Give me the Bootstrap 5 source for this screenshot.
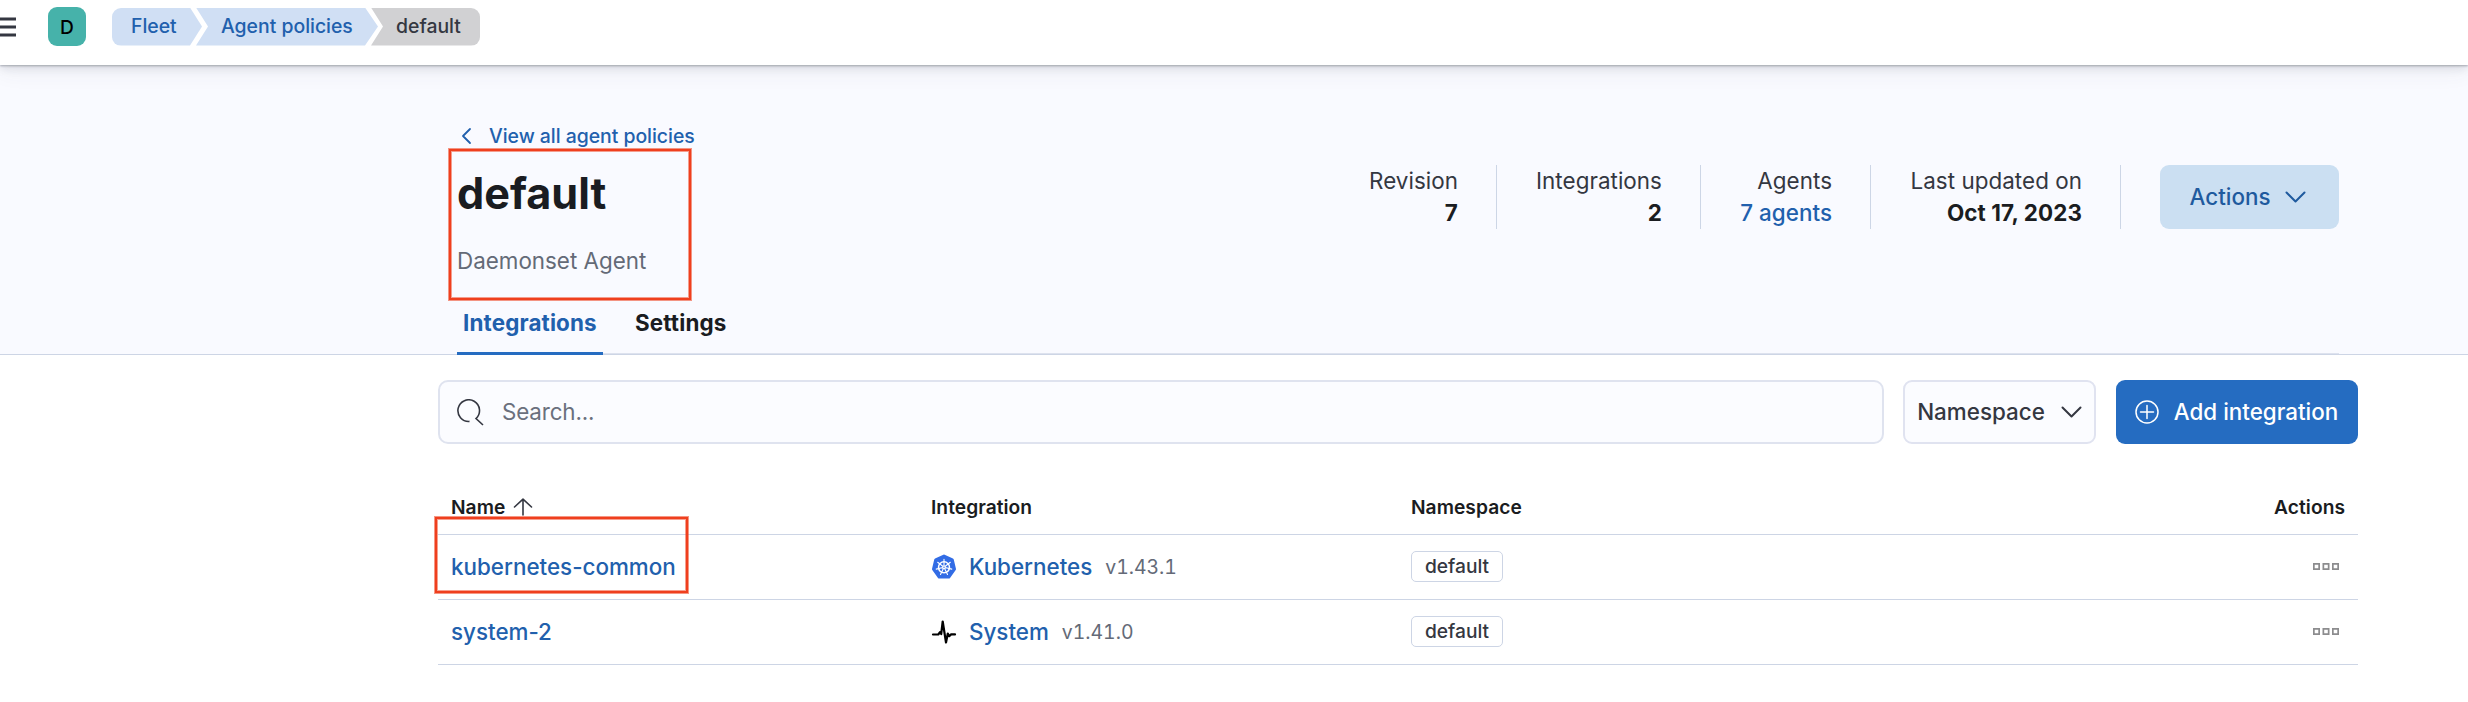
<!DOCTYPE html>
<html lang="en">
<head>
<meta charset="utf-8">
<title>Fleet - Agent policies - default</title>
<link rel="stylesheet" href="https://cdn.jsdelivr.net/npm/bootstrap@5.3.0/dist/css/bootstrap.min.css">
<style>
  body { font-family: Inter, "Liberation Sans", sans-serif; font-size: 22.4px; line-height: 32px; color: #343741; background: #fff; height: 702px; overflow: hidden; }
  a { color: #2160ad; text-decoration: none; font-weight: 500; }
  svg { display: block; flex: none; }
  .app-header { height: 65px; padding-bottom: 12px; position: relative; z-index: 2; background: #fff; box-shadow: 0 1px 2px rgba(60,65,80,.38), 0 3px 9px rgba(60,65,80,.14), 0 8px 20px rgba(60,65,80,.06); }
  .burger { width: 16px; margin-right: 32px; }
  .avatar { width: 38px; height: 39px; border-radius: 9px; background: #46b2aa; color: #000; font-size: 19.2px; font-weight: 500; margin-right: 26px; }
  .crumb { height: 38px; font-size: 19.4px; font-weight: 500; background: #d0dff4; color: #2160ad; line-height: 37px; white-space: nowrap; }
  .crumb-first { width: 90px; padding-left: 19px; border-radius: 9px 0 0 9px; clip-path: polygon(0 0,78px 0,100% 50%,78px 100%,0 100%); }
  .crumb-mid { width: 182px; margin-left: -6px; padding-left: 25px; clip-path: polygon(0 0,169px 0,100% 50%,169px 100%,0 100%,12px 50%); }
  .crumb-last { width: 109px; margin-left: -7px; padding-left: 25px; border-radius: 0 9px 9px 0; background: #d1d1d3; color: #343741; clip-path: polygon(0 0,100% 0,100% 100%,0 100%,12px 50%); }
  .page-head { height: 290px; background: #f9faff; border-bottom: 1px solid #cdd5e5; }
  .head-inner { width: 1882px; margin-left: 457px; height: 289px; border-bottom: 1px solid #dde2ee; padding-top: 55px; }
  .back-link { font-size: 19.4px; line-height: 32px; gap: 17px; padding-left: 4px; height: 32px; letter-spacing: -.02px; }
  .policy-title { font-size: 43.2px; font-weight: 700; line-height: 52px; color: #1a1c21; margin: 15px 0 0; letter-spacing: 0; }
  .policy-desc { color: #646a77; margin: 26px 0 0; line-height: 32px; }
  .stat { height: 64px; text-align: right; border-right: 1px solid #cdd6e6; padding-right: 38px; margin-right: 39px; white-space: nowrap; letter-spacing: .05px; }
  .stat:nth-child(2) { width: 165px; }
  .stat:nth-child(3) { width: 131px; }
  .stat:nth-child(4) { width: 211px; }
  .stat b { color: #1a1c21; font-weight: 700; letter-spacing: .12px; }
  .stats { padding-top: 45px; }
  .btn-tool { height: 64px; border-radius: 9px; border: 0; font-size: 22.4px; font-weight: 500; padding: 0; line-height: 32px; white-space: nowrap; }
  .btn-actions { width: 179px; background: #cbdff2; color: #1f5a9e; gap: 15px; padding-right: 3px; }
  .btn-ns { width: 193px; background: #fbfcff; border: 2px solid #e0e3f0; color: #343741; gap: 16px; margin-left: 19px; }
  .btn-add { width: 242px; background: #256cc1; color: #fff; gap: 15px; margin-left: 20px; padding-right: 1px; }
  .tab-item { height: 66px; line-height: 32px; padding-top: 18px; font-weight: 700; color: #1a1c21; letter-spacing: .15px; }
  .tab-on { width: 146px; color: #2160ad; border-bottom: 3px solid #256cc1; margin-right: 32px; padding-left: 6px; }
  .tabs-row { margin-top: 12px; }
  .content { width: 1920px; margin: 25px 0 0 438px; }
  .search-box { width: 1446px; height: 64px; border: 2px solid #dfe3ef; border-radius: 10px; background: #fbfcff; color: #6a707d; padding-left: 17px; gap: 18px; letter-spacing: -.15px; }
  .grid-row { display: grid; grid-template-columns: 480px 480px 480px 1fr; height: 65px; border-bottom: 1px solid #cdd5e5; padding-left: 13px; padding-right: 13px; align-items: center; }
  .grid-head { height: 56px; margin-top: 35px; font-size: 19.2px; font-weight: 600; color: #1a1c21; letter-spacing: .04px; }
  .pkg-link { margin-left: 12px; }
  .ver { font-size: 19.4px; color: #646a77; margin-left: 13px; font-variant-numeric: tabular-nums; }
  .ns-tag { width: 92px; height: 31px; border: 1px solid #cdd5e5; border-radius: 5px; font-size: 19.2px; font-weight: 500; line-height: 28px; text-align: center; margin-bottom: 2px; }
  .row-menu { margin: 0 6px 2px auto; }
  .marker { position: absolute; border: 2px solid #ef3f1e; box-shadow: 0 0 0 1px rgba(239,63,30,.55), inset 0 0 0 1px rgba(239,63,30,.5); pointer-events: none; }
  .marker-title { left: -8px; top: 29px; width: 242px; height: 151px; }
  .marker-row { left: -16px; top: -34px; width: 253px; height: 76px; }
</style>
</head>
<body>
<header class="app-header d-flex align-items-center">
  <svg class="burger" width="16" height="22" viewBox="0 0 16 22" fill="#343741"><path d="M0 1.500h16v3H0zM0 9.500h16v3H0zM0 17.500h16v3H0z"/></svg>
  <div class="avatar d-flex align-items-center justify-content-center">D</div>
  <nav class="d-flex">
    <a class="crumb crumb-first" href="#">Fleet</a>
    <a class="crumb crumb-mid" href="#">Agent policies</a>
    <span class="crumb crumb-last">default</span>
  </nav>
</header>

<section class="page-head">
  <div class="head-inner">
    <div class="d-flex justify-content-between">
      <div class="position-relative">
        <a class="back-link d-flex align-items-center text-nowrap" href="#"><svg width="11" height="18" viewBox="0 0 11 18" fill="none" stroke="#2160ad" stroke-width="1.800" stroke-linecap="round" stroke-linejoin="round"><path d="M9 2 2 9l7 7"/></svg>View all agent policies</a>
        <h1 class="policy-title">default</h1>
        <p class="policy-desc text-nowrap">Daemonset Agent</p>
        <div class="marker marker-title"></div>
      </div>
      <div class="stats d-flex align-items-start">
        <div class="stat">Revision<br><b>7</b></div>
        <div class="stat">Integrations<br><b>2</b></div>
        <div class="stat">Agents<br><a href="#">7 agents</a></div>
        <div class="stat">Last updated on<br><b>Oct 17, 2023</b></div>
        <button class="btn btn-tool btn-actions d-flex align-items-center justify-content-center">Actions <svg width="21" height="12" viewBox="0 0 21 12" fill="none" stroke="currentColor" stroke-width="2" stroke-linecap="round" stroke-linejoin="round"><path d="m1.500 1.500 9 9 9-9"/></svg></button>
      </div>
    </div>
    <div class="tabs-row d-flex">
      <div class="tab-item tab-on">Integrations</div>
      <div class="tab-item">Settings</div>
    </div>
  </div>
</section>

<main class="content">
  <div class="d-flex">
    <div class="search-box d-flex align-items-center">
      <svg width="27" height="27" viewBox="0 0 27 27" fill="none" stroke="#343741" stroke-width="1.600" stroke-linecap="butt"><path d="M12.500 22.400A10.800 10.800 0 1 1 19 19.600L26 26"/></svg>
      <span>Search...</span>
    </div>
    <button class="btn btn-tool btn-ns d-flex align-items-center justify-content-center">Namespace <svg width="21" height="12" viewBox="0 0 21 12" fill="none" stroke="currentColor" stroke-width="2" stroke-linecap="round" stroke-linejoin="round"><path d="m1.500 1.500 9 9 9-9"/></svg></button>
    <button class="btn btn-tool btn-add d-flex align-items-center justify-content-center"><svg width="24" height="24" viewBox="0 0 24 24" fill="none" stroke="#fff" stroke-width="1.500" stroke-linecap="round"><circle cx="12" cy="12" r="11"/><path d="M12 5.500v13M5.500 12h13"/></svg>Add integration</button>
  </div>

  <div class="grid-row grid-head">
    <div class="d-flex align-items-center">Name <svg class="ms-2" width="20" height="18" viewBox="0 0 20 18" fill="none" stroke="#343741" stroke-width="1.600" stroke-linecap="round" stroke-linejoin="round"><path d="M10 17V1.500M1.500 9 10 1.200 18.500 9"/></svg></div>
    <div>Integration</div>
    <div>Namespace</div>
    <div class="text-end">Actions</div>
  </div>
  <div class="grid-row">
    <div class="position-relative"><a href="#">kubernetes-common</a><div class="marker marker-row"></div></div>
    <div class="d-flex align-items-center">
      <svg width="26" height="26" viewBox="0 0 26 26"><path d="M13 2 21.300 5.900 23.500 15.200 17.800 23H8.200L2.500 15.200 4.700 5.900Z" fill="#326ce5" stroke="#326ce5" stroke-width="3" stroke-linejoin="round"/>
        <g fill="none" stroke="#fff" stroke-linecap="round"><circle cx="13" cy="13.300" r="5.500" stroke-width="1.500"/><path stroke-width="1.100" d="M13 13.300V5.300M13 13.300 19.300 8.300M13 13.300 20.800 15.100M13 13.300 16.500 20.500M13 13.300 9.500 20.500M13 13.300 5.200 15.100M13 13.300 6.700 8.300"/></g><circle cx="13" cy="13.300" r="1.700" fill="#fff"/><circle cx="13" cy="13.300" r=".7" fill="#326ce5"/></svg>
      <a class="pkg-link" href="#">Kubernetes</a><span class="ver">v1.43.1</span>
    </div>
    <div><div class="ns-tag">default</div></div>
    <svg class="row-menu" width="26" height="7" viewBox="0 0 26 7" fill="none" stroke="#8c8c8e" stroke-width="1.700"><path d="M.85.85h5.300v5.300h-5.300zM10.350.85h5.300v5.300h-5.300zM19.850.85h5.300v5.300h-5.300z"/></svg>
  </div>
  <div class="grid-row">
    <div><a href="#">system-2</a></div>
    <div class="d-flex align-items-center">
      <svg width="26" height="26" viewBox="0 0 26 26" fill="none" stroke="#000" stroke-width="2.200" stroke-linejoin="round" stroke-linecap="round"><path d="M2 15.500h5.300l1.700-2.300 1.200 1.800L11.700 2.500l3.300 21 1.800-9 1.400 2.700 1.900-1.800H24"/></svg>
      <a class="pkg-link" href="#">System</a><span class="ver">v1.41.0</span>
    </div>
    <div><div class="ns-tag">default</div></div>
    <svg class="row-menu" width="26" height="7" viewBox="0 0 26 7" fill="none" stroke="#8c8c8e" stroke-width="1.700"><path d="M.85.85h5.300v5.300h-5.300zM10.350.85h5.300v5.300h-5.300zM19.850.85h5.300v5.300h-5.300z"/></svg>
  </div>
</main>
<script src="https://cdn.jsdelivr.net/npm/bootstrap@5.3.0/dist/js/bootstrap.bundle.min.js"></script>
</body>
</html>
